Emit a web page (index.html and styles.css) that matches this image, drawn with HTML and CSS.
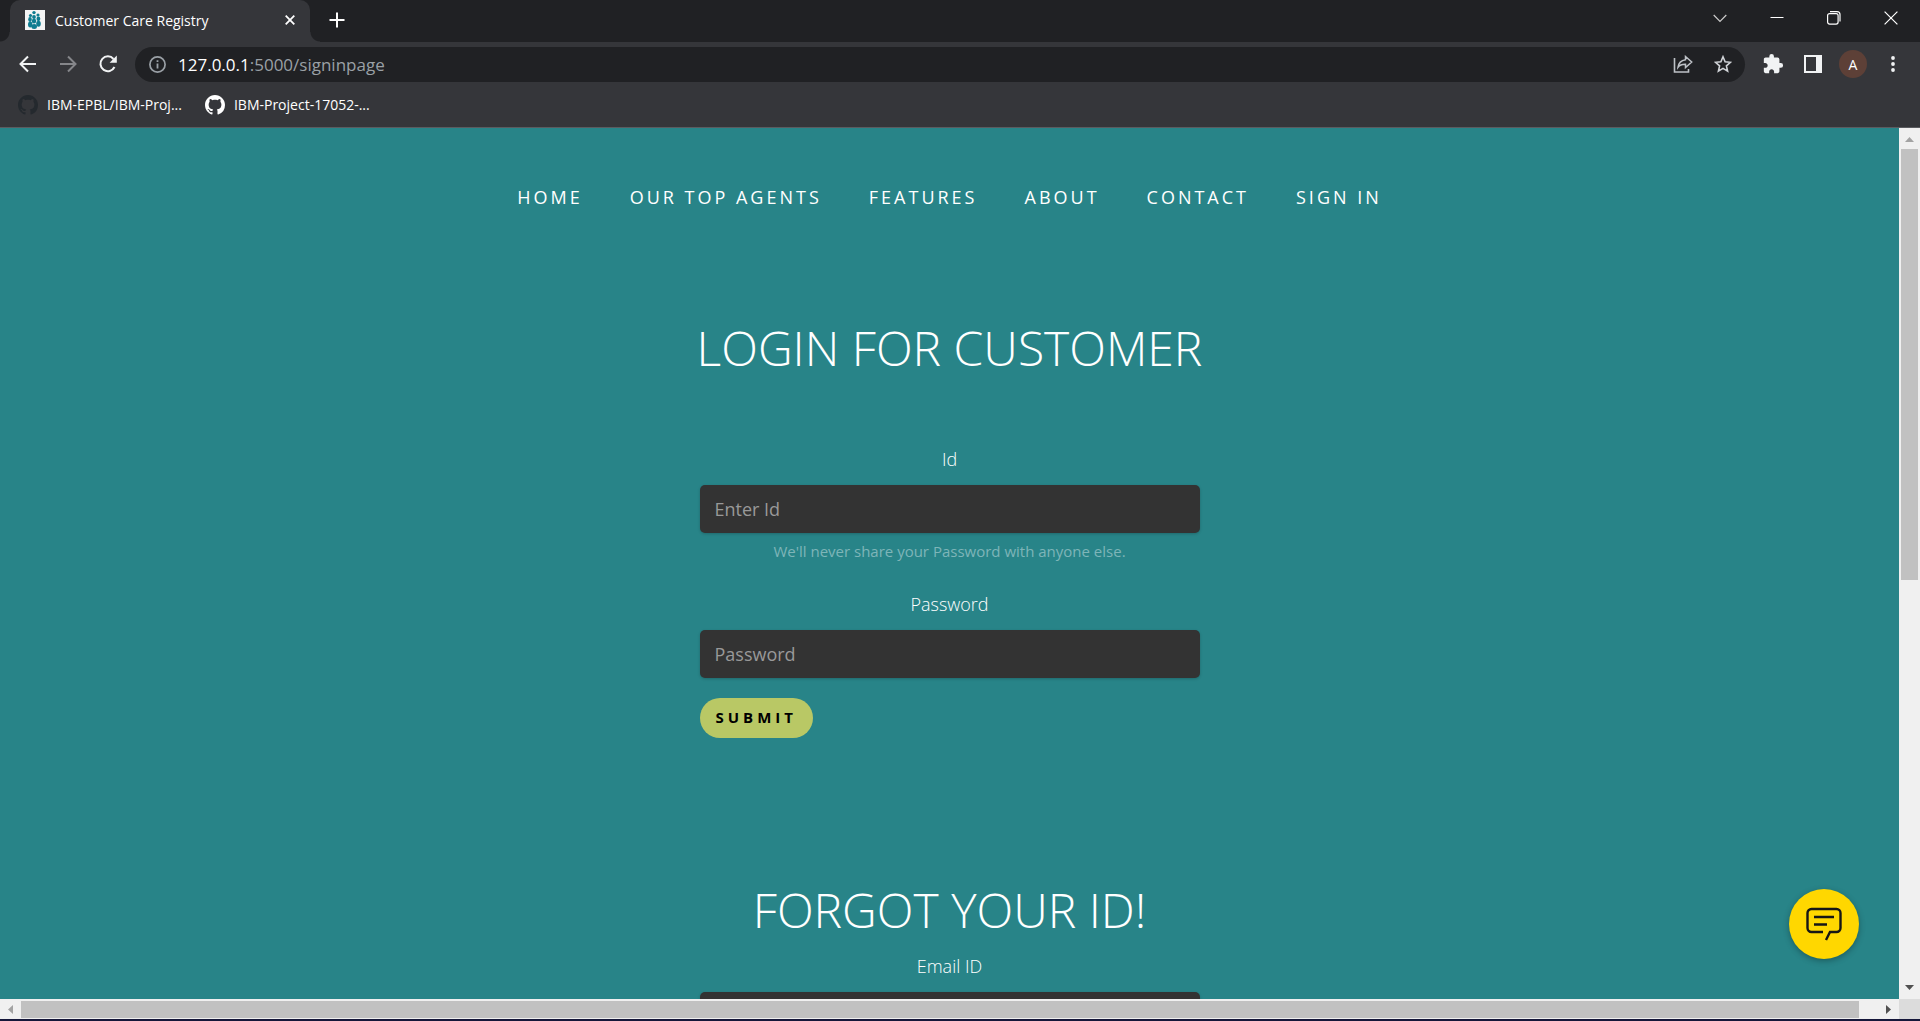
FILE: index.html
```html
<!DOCTYPE html>
<html lang="en">
<head>
<meta charset="utf-8">
<title>Customer Care Registry</title>
<link rel="stylesheet" href="styles.css">
</head>
<body>
<svg class="defs" aria-hidden="true">
  <symbol id="github" viewBox="0 0 16 16"><path d="M8 0C3.58 0 0 3.58 0 8c0 3.54 2.29 6.53 5.47 7.59.4.07.55-.17.55-.38 0-.19-.01-.82-.01-1.49-2.01.37-2.53-.49-2.69-.94-.09-.23-.48-.94-.82-1.13-.28-.15-.68-.52-.01-.53.63-.01 1.08.58 1.23.82.72 1.21 1.87.87 2.33.66.07-.52.28-.87.51-1.07-1.78-.2-3.64-.89-3.64-3.95 0-.87.31-1.59.82-2.15-.08-.2-.36-1.02.08-2.12 0 0 .67-.21 2.2.82.64-.18 1.32-.27 2-.27s1.36.09 2 .27c1.53-1.04 2.2-.82 2.2-.82.44 1.1.16 1.92.08 2.12.51.56.82 1.27.82 2.15 0 3.07-1.87 3.75-3.65 3.95.29.25.54.73.54 1.48 0 1.07-.01 1.93-.01 2.2 0 .21.15.46.55.38A8.01 8.01 0 0 0 16 8c0-4.42-3.58-8-8-8z"/></symbol>
</svg>
<div class="browser">
  <header class="chrome">
    <div class="tabstrip">
      <div class="tab">
        <svg class="favicon" viewBox="0 0 20 20"><rect width="20" height="20" fill="#f4f4f4"/><g fill="#0e7c90"><circle cx="9" cy="2.6" r="1.7"/><circle cx="5.5" cy="5.5" r="1.6"/><circle cx="13" cy="5" r="1.6"/><circle cx="9" cy="7" r="1.9"/><ellipse cx="5" cy="9.500" rx="1.800" ry="2.400"/><ellipse cx="13.400" cy="8.800" rx="1.900" ry="2.400"/><ellipse cx="9" cy="11" rx="2.200" ry="2.600"/><ellipse cx="5.200" cy="14.500" rx="2.200" ry="3"/><ellipse cx="13.500" cy="13.800" rx="2.300" ry="3"/><ellipse cx="9.200" cy="16.500" rx="2.800" ry="2.500"/></g></svg>
        <span class="tab-title">Customer Care Registry</span>
        <button class="icon-btn tab-close" aria-label="Close tab"><svg width="10" height="10" viewBox="0 0 10 10"><path d="M.7.7l8.600 8.600M9.300.7L.7 9.300" stroke="#fff" stroke-width="1.800"/></svg></button>
      </div>
      <button class="icon-btn new-tab" aria-label="New tab"><svg width="16" height="16" viewBox="0 0 16 16"><path d="M8 .5v15M.5 8h15" stroke="#fff" stroke-width="2"/></svg></button>
      <div class="window-controls">
        <button class="icon-btn" aria-label="Search tabs"><svg width="14" height="14" viewBox="0 0 14 14"><path d="M.7 4L7 10.300 13.300 4" fill="none" stroke="#ccc" stroke-width="1.200"/></svg></button>
        <button class="icon-btn" aria-label="Minimize"><svg width="14" height="14" viewBox="0 0 14 14"><path d="M.5 6.500h13" stroke="#fff"/></svg></button>
        <button class="icon-btn" aria-label="Restore"><svg width="14" height="14" viewBox="0 0 14 14"><rect x=".6" y="2.600" width="10.500" height="10.500" rx="2" fill="none" stroke="#fff" stroke-width="1.200"/><path d="M3 .6h7a3 3 0 0 1 3 3v7" fill="none" stroke="#fff" stroke-width="1.200"/></svg></button>
        <button class="icon-btn" aria-label="Close"><svg width="14" height="14" viewBox="0 0 14 14"><path d="M.6.6l12.800 12.800M13.400.6L.6 13.400" stroke="#fff" stroke-width="1.200"/></svg></button>
      </div>
    </div>
    <div class="toolbar">
      <button class="icon-btn" aria-label="Back"><svg width="18" height="18" viewBox="0 0 18 18"><path d="M17 9H2M9 1.500L1.500 9 9 16.500" fill="none" stroke="#f1f3f4" stroke-width="2"/></svg></button>
      <button class="icon-btn" aria-label="Forward"><svg width="18" height="18" viewBox="0 0 18 18"><path d="M1 9h15M9 1.500L16.500 9 9 16.500" fill="none" stroke="#85868a" stroke-width="2"/></svg></button>
      <button class="icon-btn" aria-label="Reload"><svg width="18" height="18" viewBox="0 0 18 18"><path d="M15.500 12A7.400 7.400 0 1 1 14.500 4" fill="none" stroke="#f1f3f4" stroke-width="2"/><path d="M17.800.6v7.200h-7.200z" fill="#f1f3f4"/></svg></button>
      <div class="omnibox">
        <svg class="info" width="17" height="17" viewBox="0 0 17 17"><circle cx="8.500" cy="8.500" r="7.600" fill="none" stroke="#9aa0a6" stroke-width="1.700"/><path d="M8.500 7.500v5M8.500 4.300v1.800" stroke="#9aa0a6" stroke-width="1.800"/></svg>
        <div class="url">127.0.0.1<span class="url-path">:5000/signinpage</span></div>
        <button class="icon-btn" aria-label="Share"><svg width="20" height="18" viewBox="0 0 20 18"><path d="M1.500 3v14h14v-3" fill="none" stroke="#bdc1c6" stroke-width="1.600"/><path d="M12.500 1.500L18.700 7l-6.200 5.500V9.300C9 9.200 6.700 10 5 12.300c.5-4 3-7 7.500-7.600z" fill="none" stroke="#bdc1c6" stroke-width="1.500"/></svg></button>
        <button class="icon-btn" aria-label="Bookmark"><svg width="18" height="18" viewBox="0 0 18 18"><path d="M9 1.800l2.100 5 5.400.5-4.100 3.600 1.200 5.300L9 13.400l-4.600 2.800 1.200-5.300L1.500 7.300l5.400-.5z" fill="none" stroke="#d0d3d7" stroke-width="1.600"/></svg></button>
      </div>
      <div class="actions">
        <button class="icon-btn" aria-label="Extensions"><svg width="22" height="22" viewBox="0 0 24 24"><path fill="#f1f3f4" d="M20.500 11H19V7c0-1.100-.9-2-2-2h-4V3.500a2.500 2.500 0 0 0-5 0V5H4c-1.100 0-2 .9-2 2v3.800h1.500c1.500 0 2.700 1.200 2.700 2.700S5 16.200 3.500 16.200H2V20c0 1.100.9 2 2 2h3.800v-1.500c0-1.500 1.200-2.700 2.700-2.700s2.700 1.200 2.700 2.700V22H17c1.100 0 2-.9 2-2v-4h1.500a2.500 2.500 0 0 0 0-5z"/></svg></button>
        <button class="icon-btn" aria-label="Side panel"><svg width="18" height="18" viewBox="0 0 18 18"><rect x="1" y="1" width="16" height="16" fill="none" stroke="#f1f3f4" stroke-width="2"/><path d="M12 1h5v16h-5z" fill="#f1f3f4"/></svg></button>
        <button class="icon-btn avatar" aria-label="Profile">A</button>
        <button class="icon-btn" aria-label="Menu"><svg width="18" height="18" viewBox="0 0 18 18" fill="#f1f3f4"><circle cx="9" cy="3" r="1.900"/><circle cx="9" cy="9" r="1.900"/><circle cx="9" cy="15" r="1.900"/></svg></button>
      </div>
    </div>
    <nav class="bookmarks" aria-label="Bookmarks">
      <a href="#"><svg width="20" height="20" fill="#24292e"><use href="#github"/></svg>IBM-EPBL/IBM-Proj...</a>
      <a href="#"><svg width="20" height="20" fill="#fff"><use href="#github"/></svg>IBM-Project-17052-...</a>
    </nav>
  </header>
  <div class="viewport">
    <main class="page">
      <nav class="site-nav">
        <a href="#">HOME</a>
        <a href="#">OUR TOP AGENTS</a>
        <a href="#">FEATURES</a>
        <a href="#">ABOUT</a>
        <a href="#">CONTACT</a>
        <a href="#">SIGN IN</a>
      </nav>
      <h1>LOGIN FOR CUSTOMER</h1>
      <form class="form">
        <label for="cust-id">Id</label>
        <input id="cust-id" type="text" placeholder="Enter Id">
        <small>We'll never share your Password with anyone else.</small>
        <label for="cust-pass">Password</label>
        <input id="cust-pass" type="password" placeholder="Password">
        <button class="submit" type="button">SUBMIT</button>
      </form>
      <h1 class="forgot">FORGOT YOUR ID!</h1>
      <form class="form">
        <label for="email">Email ID</label>
        <input id="email" type="email">
      </form>
    </main>
    <button class="chat" aria-label="Open chat"><svg width="36" height="34" viewBox="0 0 36 34"><path d="M17 25H5.500A4 4 0 0 1 1.500 21V6a4 4 0 0 1 4-4h25a4 4 0 0 1 4 4v15a4 4 0 0 1-4 4H24l-4 8" fill="none" stroke="#161616" stroke-width="2.400"/><path d="M8 10h20M8 17.500h13" stroke="#161616" stroke-width="2.400"/></svg></button>
    <div class="vbar">
      <svg class="arrow" viewBox="0 0 21 21"><path d="M6 14h9l-4.500-5z" fill="#a3a3a3"/></svg>
      <div class="vthumb"></div><div class="vrest"></div>
      <svg class="arrow" viewBox="0 0 21 21"><path d="M6 7h9l-4.500 5z" fill="#505050"/></svg>
    </div>
    <div class="hbar">
      <svg class="arrow" viewBox="0 0 21 21"><path d="M13 6v9l-5-4.500z" fill="#a3a3a3"/></svg>
      <div class="hthumb"></div><div class="hrest"></div>
      <svg class="arrow" viewBox="0 0 21 21"><path d="M8 6v9l5-4.500z" fill="#505050"/></svg>
    </div>
    <div class="corner"></div>
  </div>
</div>
</body>
</html>
```
FILE: styles.css
```css
* { box-sizing: border-box; }
body {
  margin: 0;
  font-family: "Open Sans", "Noto Sans", sans-serif;
  color: #fff;
  overflow: hidden;
}
.defs { display: none; }
svg { display: block; flex: none; }
a { color: inherit; text-decoration: none; }
button, input { font: inherit; color: inherit; border: 0; padding: 0; }

.browser {
  display: flex;
  flex-direction: column;
  height: 100vh;
  border-bottom: 2px solid #15173a;
}

/* Browser chrome */
.chrome { background: #35363a; border-bottom: 1px solid #5b5c60; font-size: 14px; }
.icon-btn {
  display: flex;
  align-items: center;
  justify-content: center;
  flex: none;
  background: none;
}
.tabstrip { display: flex; height: 42px; background: #202124; padding-left: 10px; }
.tab {
  position: relative;
  display: flex;
  align-items: center;
  width: 300px;
  padding: 0 15px 2px;
  background: #35363a;
  border-radius: 10px 10px 0 0;
}
.tab::before, .tab::after {
  content: "";
  position: absolute;
  bottom: 0;
  width: 10px;
  height: 10px;
}
.tab::before { right: 100%; background: radial-gradient(circle at 0 0, #202124 9px, #35363a 10px); }
.tab::after { left: 100%; background: radial-gradient(circle at 100% 0, #202124 9px, #35363a 10px); }
.favicon { width: 20px; height: 20px; }
.tab-title { flex: 1; padding-left: 10px; }
.new-tab { width: 54px; height: 40px; }
.window-controls { display: flex; margin-left: auto; padding-right: 1px; height: 36px; }
.window-controls .icon-btn { width: 57px; }
.toolbar { display: flex; align-items: center; height: 44px; padding-left: 8px; }
.toolbar > .icon-btn { width: 40px; height: 40px; }
.omnibox {
  display: flex;
  align-items: center;
  flex: 1;
  height: 35px;
  margin-left: 7px;
  padding: 0 2px 0 14px;
  border-radius: 18px;
  background: #202124;
}
.omnibox .icon-btn { width: 40px; height: 32px; }
.url { flex: 1; padding-left: 12px; font-size: 17px; }
.url-path { color: #9aa0a6; }
.actions { display: flex; padding: 0 7px 0 8px; }
.actions .icon-btn { width: 40px; height: 28px; }
.actions .avatar { width: 28px; margin: 0 6px; border-radius: 50%; background: #5d4037; }
.bookmarks { display: flex; gap: 23px; height: 41px; padding: 0 18px; }
.bookmarks a { display: flex; align-items: center; gap: 9px; height: 37px; }

/* Page area with its scroll bars */
.viewport {
  position: relative;
  display: grid;
  grid-template-columns: minmax(0, 1fr) 21px;
  grid-template-rows: minmax(0, 1fr) 20px;
  flex: 1;
  min-height: 0;
}
.page {
  overflow: hidden;
  padding-top: 55px;
  background: #288488;
  font-size: 18px;
  line-height: 28px;
  text-align: center;
}
.site-nav { display: flex; justify-content: center; gap: 47px; letter-spacing: 3px; }
h1 { margin: 107px 0 0; font-size: 48px; line-height: 60px; font-weight: 300; }
.form { display: flex; flex-direction: column; width: 500px; margin: 0 auto; font-weight: 300; }
h1 + .form { margin-top: 67px; }
h1.forgot { margin-top: 142px; }
h1.forgot + .form { margin-top: 12px; }
.form input {
  height: 48px;
  margin-top: 12px;
  padding: 0 15px;
  border-radius: 5px;
  background: #333;
  box-shadow: 0 1px 3px rgba(0, 0, 0, .2);
  font-weight: 400;
}
.form input::placeholder { color: #999; opacity: 1; }
.form small { margin: 4px 0 25px; font-size: 15px; font-weight: 400; color: #7eb5b8; }
.submit {
  align-self: flex-start;
  height: 40px;
  margin-top: 20px;
  padding: 0 16px 2px;
  border-radius: 20px;
  background: #b9c865;
  color: #000;
  font-size: 15px;
  font-weight: 700;
  letter-spacing: 4px;
}
.chat {
  position: absolute;
  right: 61px;
  bottom: 60px;
  display: flex;
  align-items: center;
  justify-content: center;
  width: 70px;
  height: 70px;
  border-radius: 50%;
  background: #ffd700;
  box-shadow: 0 2px 6px rgba(0, 0, 0, .3);
}
.arrow { width: 21px; height: 21px; }
.vbar, .hbar { display: flex; background: #f0f0f0; }
.vbar { flex-direction: column; }
.hbar { align-items: center; }
.vthumb { flex: 52; margin: 0 2px; background: #c1c1c1; }
.vrest { flex: 48; }
.hthumb { flex: 99; height: 17px; background: #c1c1c1; }
.hrest { flex: 1; }
.corner { background: #dcdcdc; }
```
